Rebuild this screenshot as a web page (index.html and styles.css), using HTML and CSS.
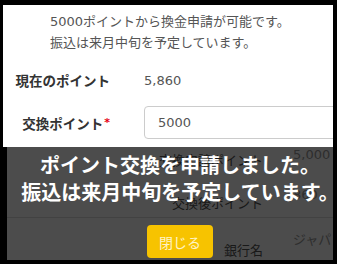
FILE: index.html
```html
<!DOCTYPE html>
<html lang="ja">
<head>
  <meta charset="UTF-8" />
  <meta name="viewport" content="width=device-width, initial-scale=1.0" />
  <title>ポイント交換</title>
  <link rel="stylesheet" href="styles.css">
</head>
<body>
  <div class="frame">
    <p class="notice">5000ポイントから換金申請が可能です。<br>振込は来月中旬を予定しています。</p>

    <div class="row">
      <div class="label">現在のポイント</div>
      <div class="value">5,860</div>
    </div>
    <div class="row row-input">
      <label class="label" for="points">交換ポイント<span class="req">*</span></label>
      <input type="text" id="points" value="5000" />
    </div>

    <div class="confirm">
      <div class="crow crow-first">
        <div class="clabel">交換申請ポイント</div>
        <div class="cvalue">5,000</div>
      </div>
      <div class="crow crow-second">
        <div class="clabel">交換後ポイント</div>
        <div class="cvalue">860</div>
      </div>
      <div class="crow crow-third">
        <div class="clabel">銀行名</div>
        <div class="cvalue">ジャパン銀行</div>
      </div>
    </div>

    <div class="overlay">
      <div class="message">
        <p>ポイント交換を申請しました。<br>振込は来月中旬を予定しています。</p>
        <button class="close">閉じる</button>
      </div>
    </div>
  </div>
</body>
</html>
```

FILE: styles.css
```css
body {
  margin: 0;
  background: #fff;
  font-family: "DejaVu Sans", "Noto Sans CJK JP", sans-serif;
  color: #555;
}
.frame {
  position: relative;
  width: 330px;
  height: 255px;
  border-style: solid;
  border-color: #000;
  border-width: 5px 4px 4px 3px;
  overflow: hidden;
  background: #fff;
}
.notice {
  margin: 0;
  padding: 6px 0 0 47px;
  font-size: 13px;
  line-height: 21px;
  color: #555;
}
.row {
  display: flex;
  align-items: center;
  gap: 34px;
  height: 30px;
  margin-top: 12px;
  font-size: 13px;
}
.row-input {
  height: 33px;
  margin-top: 11px;
}
.label {
  width: 107px;
  flex: none;
  text-align: right;
  font-size: 13.5px;
  font-weight: bold;
  color: #333;
}
.req {
  color: #e60012;
  font-size: 11px;
  vertical-align: 3px;
  margin-left: 1px;
}
.value {
  color: #555;
}
input[type="text"] {
  box-sizing: border-box;
  width: 220px;
  height: 33px;
  flex: none;
  padding: 0 13px;
  font: inherit;
  font-size: 13px;
  color: #555;
  border: 1px solid #ccc;
  border-radius: 4px;
}
.confirm {
  font-size: 13px;
  line-height: 21px;
}
.crow {
  display: flex;
  align-items: flex-start;
  gap: 30px;
}
.clabel {
  width: 260px;
  flex: none;
  text-align: right;
  color: #555;
}
.cvalue {
  white-space: nowrap;
  color: #999;
}
.crow-first {
  height: 45px;
}
.crow-first .clabel { padding-top: 11px; }
.crow-first .cvalue { padding-top: 5px; }
.crow-second {
  height: 33px;
  border-bottom: 1px solid #ddd;
}
.crow-second .clabel { padding-top: 9px; }
.crow-third .clabel { padding-top: 22px; }
.crow-third .cvalue { padding-top: 11px; }
.overlay {
  position: absolute;
  top: 142px;
  left: 0;
  bottom: 0;
  width: 346px;
  border-left: 4px solid #000;
  background: rgba(0, 0, 0, 0.7);
}
.message {
  display: flex;
  flex-direction: column;
  align-items: center;
}
.message p {
  margin: 4px 0 0;
  font-family: "Noto Sans CJK JP", sans-serif;
  font-size: 20px;
  line-height: 27px;
  font-weight: bold;
  color: #fff;
  text-align: center;
}
.close {
  width: 66px;
  height: 33px;
  margin-top: 20px;
  background: #f7c300;
  border: none;
  border-radius: 4px;
  font-family: "Noto Sans CJK JP", sans-serif;
  font-size: 14px;
  color: #fff3c4;
  cursor: pointer;
}
```
